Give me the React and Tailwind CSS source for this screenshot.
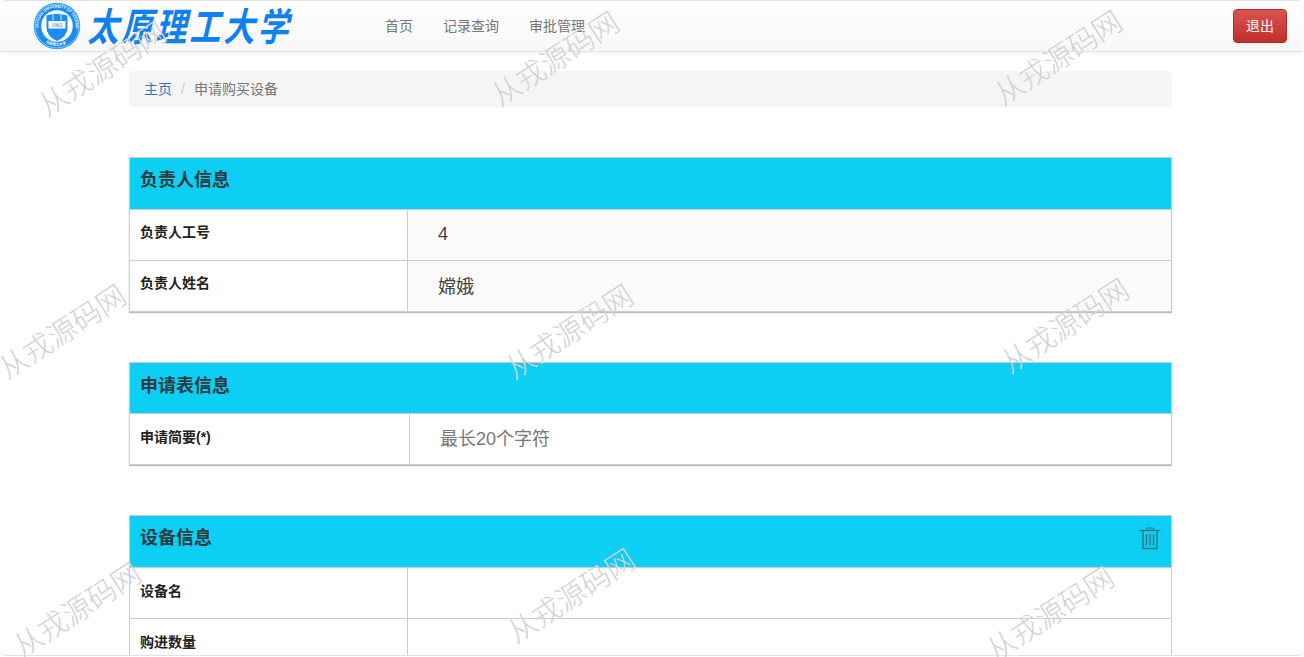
const Watermark = ({ x, y }) => (
  <div
    className="absolute pointer-events-none z-20 whitespace-nowrap text-[29px] leading-none font-extralight text-[#d2d2d2] -rotate-[33deg] -translate-x-1/2 -translate-y-1/2 [font-family:'Noto_Sans_CJK_SC',sans-serif]"
    style={{ left: x, top: y }}
  >
    从戎源码网
  </div>
);

const Seal = () => (
  <svg width="48" height="50" viewBox="0 0 48 50" className="shrink-0">
    <defs>
      <path id="ring" d="M5.5 27 A18.6 18.6 0 1 1 42.5 27" fill="none" />
      <path id="ringb" d="M9 38 A20 20 0 0 0 39 38" fill="none" />
    </defs>
    <circle cx="24" cy="25" r="23.2" fill="#1a8cf5" />
    <circle cx="24" cy="25" r="22" fill="none" stroke="#fff" strokeWidth="0.5" />
    <circle cx="24" cy="25" r="15.8" fill="#fff" />
    <text fontSize="3.7" fill="#fff" fontFamily="Liberation Sans" fontWeight="700">
      <textPath href="#ring">TAIYUAN UNIVERSITY OF TECHNOLOGY</textPath>
    </text>
    <text fontSize="3.6" fill="#fff" fontFamily="Noto Sans CJK SC" fontWeight="700">
      <textPath href="#ringb" startOffset="14%">太原理工大学</textPath>
    </text>
    <path d="M13.5 14.5 Q24 11 34.5 14.5 L34.5 27 Q34 35.5 24 40 Q14 35.5 13.5 27 Z" fill="#1a8cf5" />
    <path d="M15.5 20 H32.5 V27.5 H15.5 Z" fill="#fff" />
    <path d="M20 12.5 V19.5 M28 12.5 V19.5" stroke="#fff" strokeWidth="0.8" />
    <text x="24" y="26" fontSize="5.4" textAnchor="middle" fill="#1a6fc0" fontFamily="Liberation Serif">1962</text>
  </svg>
);

const Trash = () => (
  <svg width="22" height="23" viewBox="0 0 22 23" fill="none" stroke="#2f6f82" className="mb-[6px] shrink-0">
    <path d="M0.5 3.5 H21.5" strokeWidth="1.4" />
    <path d="M7.5 3 V1.8 Q7.5 1 8.5 1 H13.5 Q14.5 1 14.5 1.8 V3" strokeWidth="1" />
    <path d="M4 4 V21.5 H18 V4" strokeWidth="1.3" />
    <path d="M7.5 7 V18.5 M11 7 V18.5 M14.5 7 V18.5" strokeWidth="1.3" />
  </svg>
);

const Row = ({ label, value, col, valueClass, pt = "pt-[14px]", last }) => (
  <div className={`box-content flex h-[50px] ${last ? "" : "border-b border-[#cccccc]"}`}>
    <div className={`${col} shrink-0 border-r border-[#cccccc] pl-[10px] ${pt} text-[14px] leading-[18px] font-bold text-[#222222]`}>
      {label}
    </div>
    <div className={`flex-1 ${valueClass}`}>{value}</div>
  </div>
);

const Panel = ({ title, children, right, h = "h-[51px]", pb = "pb-[8px]", clipped }) => (
  <section
    className={`mt-[50px] border border-[#cccccc] ${clipped ? "" : "shadow-[0_1px_1px_#bbbbbb]"}`}
  >
    <div className={`${h} flex items-center justify-between bg-[#0dcff4] px-[10px]`}>
      <h2 className={`${pb} text-[18px] leading-none font-bold text-[#2b3a3f]`}>{title}</h2>
      {right}
    </div>
    <div className="border-t border-[#cccccc]">{children}</div>
  </section>
);

export default function App() {
  return (
    <div className="relative h-[657px] w-[1304px] overflow-hidden bg-white [font-family:'Liberation_Sans','Noto_Sans_CJK_SC',sans-serif]">
      <div className="h-[656px] overflow-hidden rounded-[6px] border-t border-b border-[#e2e2e2]">
        <header className="flex h-[51px] w-[1302px] items-center rounded-t-[4px] border-b border-[#e4e4e4] bg-gradient-to-b from-white to-[#f7f7f7] shadow-[0_1px_4px_rgba(0,0,0,0.06)]">
          <div className="ml-[33px] flex items-center">
            <Seal />
            <div className="mb-[4px] ml-[10px] flex w-[201px] -skew-x-[16deg] scale-y-125 justify-between text-[31px] leading-none font-bold text-[#0f80f2] [font-family:'Noto_Sans_CJK_SC',sans-serif]">
              <span>太</span><span>原</span><span>理</span><span>工</span><span>大</span><span>学</span>
            </div>
          </div>
          <nav className="ml-[93px] flex gap-[30px] text-[14px] leading-[20px] text-[#777777]">
            <span>首页</span>
            <span>记录查询</span>
            <span>审批管理</span>
          </nav>
          <button className="ml-auto h-[34px] w-[54px] rounded-[4px] border border-[#b92c28] bg-gradient-to-b from-[#d9534f] to-[#c12e2a] text-[14px] text-white">
            退出
          </button>
          <div className="w-[15px] shrink-0" />
        </header>

        <main className="ml-[129px] w-[1043px] pt-[19px]">
          <nav className="flex h-[36px] items-center rounded-[4px] bg-[#f5f5f5] px-[15px] text-[14px] text-[#777777]">
            <span className="text-[#337ab7]">主页</span>
            <span className="mx-[9px] text-[#cccccc]">/</span>
            <span>申请购买设备</span>
          </nav>

          <Panel title="负责人信息">
            <Row
              label="负责人工号"
              col="w-[278px]"
              pt="pt-[13px]"
              value="4"
              valueClass="bg-[#fafafa] pl-[30px] pt-[13px] text-[18px] leading-[22px] text-[#444444]"
            />
            <Row
              label="负责人姓名"
              col="w-[278px]"
              pt="pt-[13px]"
              value="嫦娥"
              valueClass="bg-[#fafafa] pl-[30px] pt-[14px] text-[18px] leading-[24px] text-[#444444]"
              last
            />
          </Panel>

          <Panel title="申请表信息" h="h-[50px]" pb="pb-[5px]">
            <Row
              label="申请简要(*)"
              col="w-[280px]"
              value="最长20个字符"
              valueClass="pl-[30px] pt-[12px] text-[18px] leading-[26px] text-[#777777]"
              last
            />
          </Panel>

          <Panel title="设备信息" right={<Trash />} clipped>
            <Row label="设备名" col="w-[278px]" value="" valueClass="" />
            <Row label="购进数量" col="w-[278px]" value="" valueClass="" />
          </Panel>
        </main>
      </div>

      <Watermark x={101} y={67} />
      <Watermark x={554} y={57} />
      <Watermark x={1057} y={56} />
      <Watermark x={61} y={330} />
      <Watermark x={568} y={330} />
      <Watermark x={1064} y={324} />
      <Watermark x={76} y={608} />
      <Watermark x={570} y={594} />
      <Watermark x={1049} y={612} />
    </div>
  );
}
